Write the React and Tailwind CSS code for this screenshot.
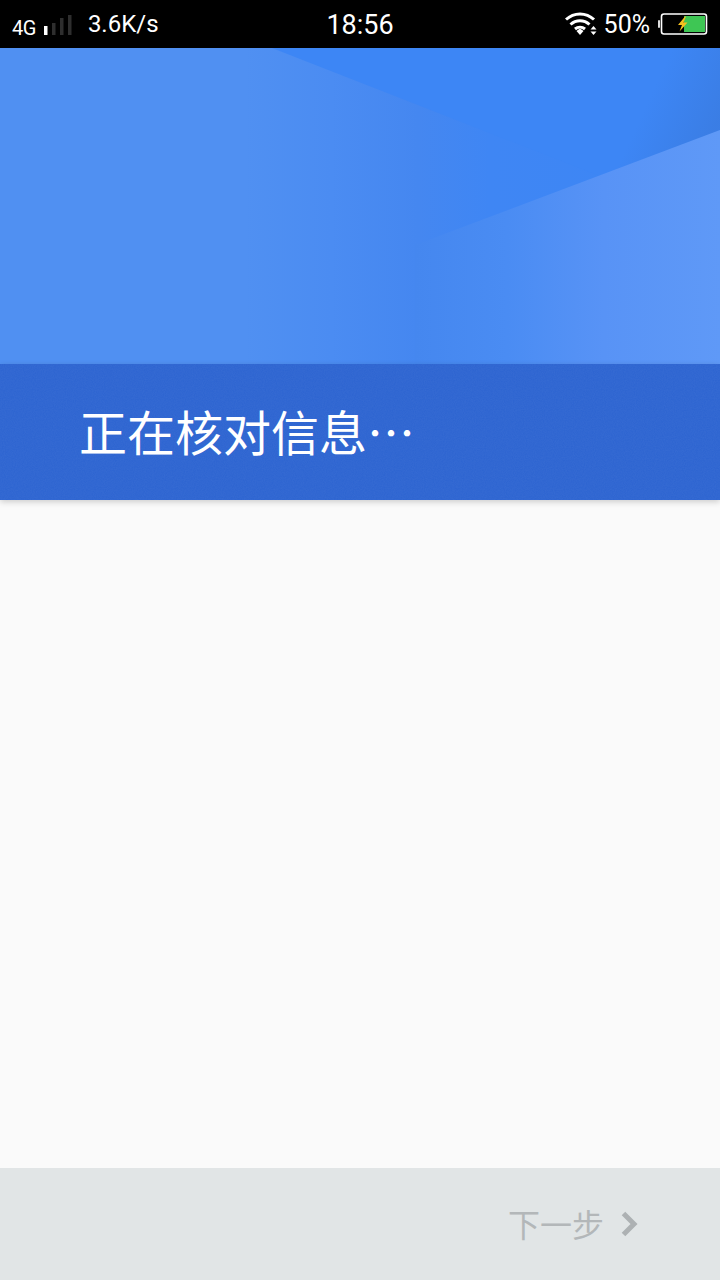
const cjk = { fontFamily: '"Noto Sans CJK SC", sans-serif' }

const SignalIcon = () => (
  <svg width="29" height="24" viewBox="0 0 29 24" className="shrink-0">
    <rect x="0" y="14" width="3.5" height="9" fill="#ffffff" />
    <rect x="8" y="11" width="3.5" height="12" fill="#2e2e2e" />
    <rect x="16" y="6" width="3.5" height="17" fill="#2e2e2e" />
    <rect x="24" y="3" width="3.5" height="20" fill="#2e2e2e" />
  </svg>
)

const WifiIcon = () => (
  <svg width="34" height="26" viewBox="0 0 34 26" className="shrink-0">
    <path d="M1 8.5 C9 1 21 1 29 8.5" fill="none" stroke="#fff" strokeWidth="3" />
    <path d="M5.5 13.5 C11 8.5 19 8.5 24.5 13.5" fill="none" stroke="#fff" strokeWidth="3" />
    <path d="M10 18 C13 15.5 17 15.5 20 18" fill="none" stroke="#fff" strokeWidth="3" />
    <path d="M11.5 20 L15 17.5 L18.5 20 L15 24 Z" fill="#fff" />
    <path d="M28.5 15 L31.5 18.5 L25.5 18.5 Z" fill="#fff" />
    <path d="M25.5 20.5 L31.5 20.5 L28.5 24 Z" fill="#fff" />
  </svg>
)

const BatteryIcon = () => (
  <svg width="50" height="22" viewBox="0 0 50 22" className="shrink-0">
    <rect x="0" y="7" width="2" height="8" rx="1" fill="#ddd" />
    <rect x="3.5" y="1" width="45" height="20" rx="2.5" fill="#000" stroke="#fff" strokeWidth="1.6" />
    <rect x="26" y="3" width="21" height="16" fill="#3ec654" />
    <path d="M27 3.5 L20 12 L24 12 L21.5 18.5 L29.5 9.5 L25.5 9.5 L28 3.5 Z" fill="#f3c01f" />
  </svg>
)

const HeroArt = () => (
  <svg viewBox="0 0 720 316" preserveAspectRatio="none" className="absolute inset-0 h-full w-full">
    <defs>
      <linearGradient id="base" x1="0" y1="0" x2="1" y2="0">
        <stop offset="0" stopColor="#5090f2" />
        <stop offset="0.34" stopColor="#5090f2" />
        <stop offset="0.46" stopColor="#4b8cf2" />
        <stop offset="0.58" stopColor="#4587f0" />
        <stop offset="0.68" stopColor="#3f86f4" />
        <stop offset="1" stopColor="#3c86f5" />
      </linearGradient>
      <linearGradient id="shade" gradientUnits="userSpaceOnUse" x1="640" y1="70" x2="705" y2="100">
        <stop offset="0" stopColor="#3a7ce2" stopOpacity="0" />
        <stop offset="1" stopColor="#3a7ce2" stopOpacity="0.85" />
      </linearGradient>
      <linearGradient id="light" x1="0" y1="0" x2="1" y2="0">
        <stop offset="0" stopColor="#4587ef" />
        <stop offset="0.3" stopColor="#4a8cf3" />
        <stop offset="0.62" stopColor="#5893f6" />
        <stop offset="1" stopColor="#5f99f7" />
      </linearGradient>
    </defs>
    <rect width="720" height="316" fill="url(#base)" />
    <polygon points="272,0 720,0 720,84 600,128" fill="#3d86f5" />
    <polygon points="720,0 720,84 500,166 540,0" fill="url(#shade)" />
    <polygon points="720,82 415,197 415,316 720,316" fill="url(#light)" />
  </svg>
)

// fine speckle on the blue band
const BandGrain = () => (
  <svg className="absolute inset-0 h-full w-full opacity-[0.03]">
    <filter id="grain">
      <feTurbulence type="fractalNoise" baseFrequency="0.9" numOctaves="2" />
      <feColorMatrix values="0 0 0 0 1  0 0 0 0 1  0 0 0 0 1  0 0 0 1.6 -0.3" />
    </filter>
    <rect width="100%" height="100%" filter="url(#grain)" />
  </svg>
)

export default function App() {
  return (
    <div className="flex h-[1280px] w-[720px] flex-col overflow-hidden bg-[#fafafa]" style={{ fontFamily: 'Roboto, sans-serif' }}>
      {/* Status bar */}
      <div className="flex h-12 shrink-0 items-center justify-between bg-black text-white">
        <div className="flex w-[240px] items-center pl-3">
          <span className="mt-2 text-[20px] leading-none tracking-[-0.5px]">4G</span>
          <span className="ml-2"><SignalIcon /></span>
          <span className="ml-[15px] text-[24px] leading-none">3.6K/s</span>
        </div>
        <span className="mt-0.5 text-[27px] leading-none">18:56</span>
        <div className="flex w-[240px] items-center justify-end pr-3">
          <WifiIcon />
          <span className="ml-[5px] text-[25px] leading-none">50%</span>
          <span className="ml-2"><BatteryIcon /></span>
        </div>
      </div>

      {/* Header */}
      <div className="relative h-[316px] shrink-0">
        <HeroArt />
      </div>
      <div className="relative z-10 flex h-[136px] shrink-0 items-center bg-[#2e65d1] pb-1 pl-[79px] shadow-[0_2px_6px_rgba(0,0,0,0.18)]">
        <BandGrain />
        <span className="relative text-[48px] font-normal leading-none text-white" style={cjk}>正在核对信息…</span>
      </div>

      <div className="flex-1" />

      {/* Footer */}
      <div className="flex h-28 shrink-0 items-center justify-end bg-[#e1e5e6] pr-[82px]">
        <span className="mb-0.5 text-[32px] font-normal leading-none text-[#b3b7b9]" style={cjk}>下一步</span>
        <svg width="18" height="26" viewBox="0 0 18 26" className="ml-[16px]">
          <path d="M3.5 2.5 L14 13 L3.5 23.5" fill="none" stroke="#adb1b3" strokeWidth="5" />
        </svg>
      </div>
    </div>
  )
}
